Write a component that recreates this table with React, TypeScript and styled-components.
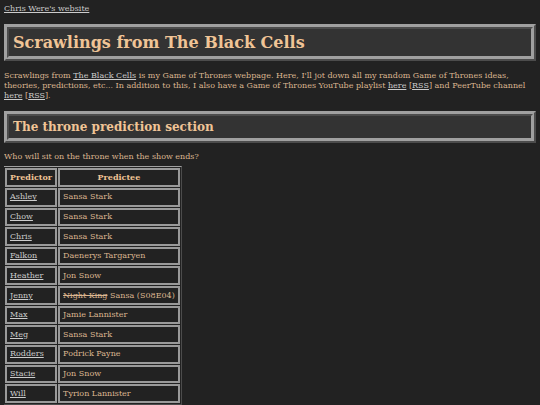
import styled, { createGlobalStyle } from "styled-components";

const GlobalStyle = createGlobalStyle`
  body {
    margin: 4px;
    background-color: #222222;
    color: #dcb690;
    font-family: "DejaVu Serif", serif;
    font-size: 8px;
  }
`;

const TopLink = styled.a`
  color: #cccccc;
  text-decoration: underline;
`;

const Title = styled.h1`
  margin: 10.7px 0;
  padding: 4px;
  font-size: 16px;
  font-weight: bold;
  color: #f0c496;
  background-color: #333333;
  border: 5px ridge #a0a0a0;
`;

const Section = styled.h2`
  margin: 10.5px 0 9px;
  padding: 4px;
  font-size: 12px;
  font-weight: bold;
  color: #f0c496;
  background-color: #333333;
  border: 5px ridge #a0a0a0;
`;

const Para = styled.p`
  margin: 8px 0;
  line-height: 1.2;
`;

const Question = styled(Para)`
  margin: 0 0 5px;
`;

const Link = styled.a`
  color: #cccccc;
  text-decoration: underline;
`;

const Table = styled.table`
  margin-left: -1px;
  border: 1px outset #a0a0a0;
  border-spacing: 1px;
`;

const Cell = styled.td<{ $head?: boolean }>`
  border: 2px solid #9a9a9a;
  padding: 2.6px 3px;
  line-height: 1.18;
  font-weight: ${(p) => (p.$head ? "bold" : "normal")};
  text-align: ${(p) => (p.$head ? "center" : "left")};
  color: ${(p) => (p.$head ? "#f0c496" : "#dcb690")};
`;

const Struck = styled.s`
  color: #dcb690;
`;

const rows: [string, React.ReactNode][] = [
  ["Ashley", "Sansa Stark"],
  ["Chow", "Sansa Stark"],
  ["Chris", "Sansa Stark"],
  ["Falkon", "Daenerys Targaryen"],
  ["Heather", "Jon Snow"],
  [
    "Jenny",
    <>
      <Struck>Night King</Struck> Sansa (S08E04)
    </>,
  ],
  ["Max", "Jamie Lannister"],
  ["Meg", "Sansa Stark"],
  ["Rodders", "Podrick Payne"],
  ["Stacie", "Jon Snow"],
  ["Will", "Tyrion Lannister"],
];

export default function App() {
  return (
    <>
      <GlobalStyle />
      <TopLink href="#">Chris Were's website</TopLink>
      <Title>Scrawlings from The Black Cells</Title>
      <Para>
        Scrawlings from <Link href="#">The Black Cells</Link> is my Game of
        Thrones webpage. Here, I'll jot down all my random Game of Thrones
        ideas, theories, predictions, etc... In addition to this, I also have a
        Game of Thrones YouTube playlist <Link href="#">here</Link> [
        <Link href="#">RSS</Link>] and PeerTube channel{" "}
        <Link href="#">here</Link> [<Link href="#">RSS</Link>].
      </Para>
      <Section>The throne prediction section</Section>
      <Question>Who will sit on the throne when the show ends?</Question>
      <Table>
        <thead>
          <tr>
            <Cell as="th" $head>
              Predictor
            </Cell>
            <Cell as="th" $head>
              Predictee
            </Cell>
          </tr>
        </thead>
        <tbody>
          {rows.map(([who, pick]) => (
            <tr key={who}>
              <Cell>
                <Link href="#">{who}</Link>
              </Cell>
              <Cell>{pick}</Cell>
            </tr>
          ))}
        </tbody>
      </Table>
    </>
  );
}
